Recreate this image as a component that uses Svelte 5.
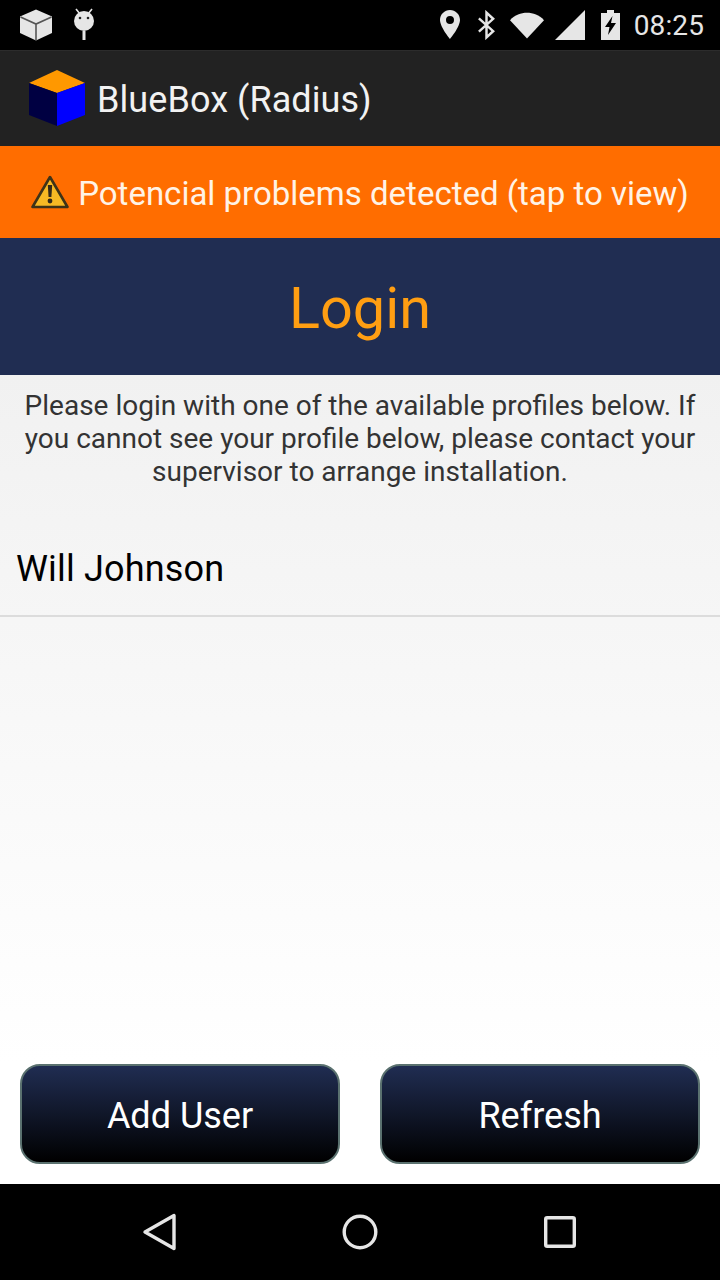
<script>
  const profiles = ['Will Johnson'];
</script>

<div class="screen">
  <div class="status">
    <div class="status-left">
      <svg class="ic" width="36" height="32" viewBox="0 0 36 32">
        <path d="M18 0.5 L34 7.5 V24 L18 31.5 L2 24 V7.5 Z" fill="#e6e6e6"/>
        <path d="M2.5 8 L18 15 L33.5 8 M18 15 V31" fill="none" stroke="#555" stroke-width="1.6"/>
      </svg>
      <svg class="ic" width="24" height="34" viewBox="0 0 24 34">
        <path d="M4 1 L8 6 M20 1 L16 6" stroke="#e6e6e6" stroke-width="1.6" fill="none"/>
        <circle cx="12" cy="13" r="10" fill="#e6e6e6"/>
        <circle cx="8" cy="10" r="1.3" fill="#222"/>
        <circle cx="16" cy="10" r="1.3" fill="#222"/>
        <rect x="10.5" y="23" width="3" height="9" fill="#e6e6e6"/>
      </svg>
    </div>
    <div class="status-right">
      <svg class="ic" width="20" height="30" viewBox="0 0 20 30">
        <path fill-rule="evenodd" d="M10 0 C4.5 0 0 4.4 0 10 C0 17 10 29 10 29 C10 29 20 17 20 10 C20 4.4 15.5 0 10 0 Z M10 6 A4 4 0 1 1 10 14 A4 4 0 1 1 10 6 Z" fill="#e6e6e6"/>
      </svg>
      <svg class="ic bt" width="19" height="30" viewBox="0 0 20 30">
        <path d="M2 8 L17 21.5 L10 28 V2 L17 8.5 L2 22" fill="none" stroke="#e6e6e6" stroke-width="2.6"/>
      </svg>
      <svg class="ic wifi" width="34" height="27" viewBox="0 0 35 27">
        <path d="M0 8 C10 -2 25 -2 35 8 L17.5 27 Z" fill="#e6e6e6"/>
      </svg>
      <svg class="ic signal" width="30" height="30" viewBox="0 0 30 30">
        <path d="M30 0 V30 H0 Z" fill="#e6e6e6"/>
      </svg>
      <svg class="ic battery" width="19" height="30" viewBox="0 0 19 30">
        <path d="M6 0 H13 V3 H19 V30 H0 V3 H6 Z" fill="#e6e6e6"/>
        <path d="M11.5 6 L4 17 H8.5 L7 25 L15 13 H10 Z" fill="#000"/>
      </svg>
      <span class="clock">08:25</span>
    </div>
  </div>

  <header class="appbar">
    <svg width="58" height="58" viewBox="0 0 58 58">
      <path d="M29 0 L57 13 L29 23 L1 13 Z" fill="#ff9800"/>
      <path d="M1 13 L29 23 V56 L1 45 Z" fill="#000042"/>
      <path d="M29 23 L57 13 V45 L29 56 Z" fill="#0000ff"/>
    </svg>
    <span class="appname">BlueBox (Radius)</span>
  </header>

  <div class="warning">
    <svg width="38" height="34" viewBox="0 0 38 34">
      <path d="M19 2 L36.5 32 H1.5 Z" fill="#f7b924" stroke="#3f3318" stroke-width="2.6" stroke-linejoin="round"/>
      <path d="M16.8 10 H21.2 L20.4 22 H17.6 Z" fill="#33291a"/>
      <circle cx="19" cy="26" r="2.4" fill="#33291a"/>
    </svg>
    <span>Potencial problems detected (tap to view)</span>
  </div>

  <div class="heading">Login</div>

  <main class="content">
    <p class="intro">Please login with one of the available profiles below. If you cannot see your profile below, please contact your supervisor to arrange installation.</p>
    <ul class="list">
      {#each profiles as name}
        <li>{name}</li>
      {/each}
    </ul>
    <div class="actions">
      <button>Add User</button>
      <button>Refresh</button>
    </div>
  </main>

  <nav class="navbar">
    <svg width="36" height="38" viewBox="0 0 36 38">
      <path d="M32 2.5 V35.5 L3 19 Z" fill="none" stroke="#e6e6e6" stroke-width="3.4" stroke-linejoin="round"/>
    </svg>
    <svg width="36" height="36" viewBox="0 0 36 36">
      <circle cx="18" cy="18" r="15.8" fill="none" stroke="#e6e6e6" stroke-width="3.4"/>
    </svg>
    <svg width="32" height="32" viewBox="0 0 32 32">
      <rect x="1.7" y="1.7" width="28.6" height="28.6" rx="1.5" fill="none" stroke="#e6e6e6" stroke-width="3.4"/>
    </svg>
  </nav>
</div>

<style>
  :global(body) {
    margin: 0;
    font-family: Roboto, "Liberation Sans", sans-serif;
  }
  .screen {
    width: 720px;
    height: 1280px;
    display: flex;
    flex-direction: column;
    overflow: hidden;
  }
  .ic { display: block; }
  .status {
    height: 50px;
    background: #000;
    display: flex;
    align-items: center;
    justify-content: space-between;
    padding: 0 16px 0 18px;
  }
  .status-left { display: flex; align-items: center; gap: 18px; }
  .status-right { display: flex; align-items: center; }
  .bt { margin-left: 17px; }
  .wifi { margin-left: 14px; }
  .signal { margin-left: 11px; }
  .battery { margin-left: 16px; }
  .clock { color: #e6e6e6; font-size: 28px; margin-left: 14px; letter-spacing: 0.1px; }
  .appbar {
    height: 96px;
    background: #222;
    border-top: 1px solid #2c2c2c;
    box-sizing: border-box;
    display: flex;
    align-items: center;
    gap: 11px;
    padding-left: 28px;
  }
  .appname { color: #f2f2f2; font-size: 36px; padding-top: 2px; letter-spacing: 0.07px; }
  .warning {
    height: 92px;
    background: #ff6d00;
    display: flex;
    align-items: center;
    justify-content: center;
    gap: 9px;
    color: #fff3e6;
    font-size: 33px;
  }
  .warning span { padding-top: 2px; }
  .heading {
    height: 137px;
    box-sizing: border-box;
    padding-top: 4px;
    background: #202d52;
    color: #ff9e12;
    font-size: 57.6px;
    display: flex;
    align-items: center;
    justify-content: center;
  }
  .content {
    flex: 1;
    min-height: 0;
    display: flex;
    flex-direction: column;
    background: linear-gradient(#f1f1f1, #ffffff 85%);
  }
  .intro {
    margin: 14px 15px 0;
    font-size: 28px;
    line-height: 33px;
    text-align: center;
    color: #333;
  }
  .list {
    list-style: none;
    margin: 33px 0 0;
    padding: 0;
  }
  .list li {
    height: 96px;
    box-sizing: border-box;
    border-bottom: 2px solid #dcdcdc;
    padding: 2px 0 0 16px;
    display: flex;
    align-items: center;
    font-size: 36px;
    letter-spacing: 0.18px;
    color: #000;
  }
  .actions {
    margin-top: auto;
    display: flex;
    gap: 40px;
    padding: 0 20px 20px;
  }
  .actions button {
    flex: 1;
    height: 100px;
    border: 2px solid #5a716f;
    border-radius: 20px;
    background: linear-gradient(#202d52, #000000);
    color: #fff;
    font-family: inherit;
    font-size: 36px;
    padding: 4px 0 0;
  }
  .navbar {
    height: 96px;
    background: #000;
    display: grid;
    grid-template-columns: 200px 200px 200px;
    justify-content: center;
    justify-items: center;
    align-items: center;
  }
</style>
